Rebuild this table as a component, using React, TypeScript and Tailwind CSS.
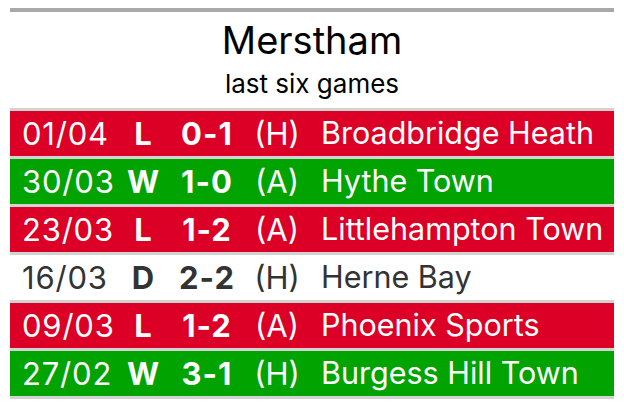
import React from "react";

type Game = { date: string; res: "W" | "L" | "D"; score: string; venue: string; team: string };

const games: Game[] = [
  { date: "01/04", res: "L", score: "0-1", venue: "(H)", team: "Broadbridge Heath" },
  { date: "30/03", res: "W", score: "1-0", venue: "(A)", team: "Hythe Town" },
  { date: "23/03", res: "L", score: "1-2", venue: "(A)", team: "Littlehampton Town" },
  { date: "16/03", res: "D", score: "2-2", venue: "(H)", team: "Herne Bay" },
  { date: "09/03", res: "L", score: "1-2", venue: "(A)", team: "Phoenix Sports" },
  { date: "27/02", res: "W", score: "3-1", venue: "(H)", team: "Burgess Hill Town" },
];

function Row({ g }: { g: Game }) {
  const bg =
    g.res === "L" ? "bg-[#dc0026] text-white" : g.res === "W" ? "bg-[#00a300] text-white" : "bg-white text-[#333333]";
  return (
    <div className="border-t-[3px] border-[#d2d2d2]">
      <div className={`h-[45px] flex items-center text-[31px] leading-none ${bg}`}>
        <div className="w-[108px] pl-[12px] whitespace-nowrap tracking-[0.8px]">{g.date}</div>
        <div className="w-[50px] text-center font-bold">{g.res}</div>
        <div className="w-[78px] text-center font-bold tracking-[1px]">{g.score}</div>
        <div className="w-[62px] text-center">{g.venue}</div>
        <div className="flex-1 pl-[13px] whitespace-nowrap text-[30.5px]">{g.team}</div>
      </div>
    </div>
  );
}

export default function App() {
  return (
    <div className="w-[624px] h-[408px] bg-white pt-[8px] px-[10px] overflow-hidden" style={{ fontFamily: "Inter, 'Liberation Sans', sans-serif" }}>
      <div className="border-t-[4px] border-[#a9a9a9]">
        <div className="h-[96px] flex flex-col items-center pt-[6px]">
          <div className="text-[38px] leading-[44px] text-black">Merstham</div>
          <div className="text-[26px] leading-[30px] text-black mt-[7px]">last six games</div>
        </div>
        {games.map((g) => (
          <Row key={g.date} g={g} />
        ))}
        <div className="border-t-[3px] border-[#d2d2d2]" />
      </div>
    </div>
  );
}
